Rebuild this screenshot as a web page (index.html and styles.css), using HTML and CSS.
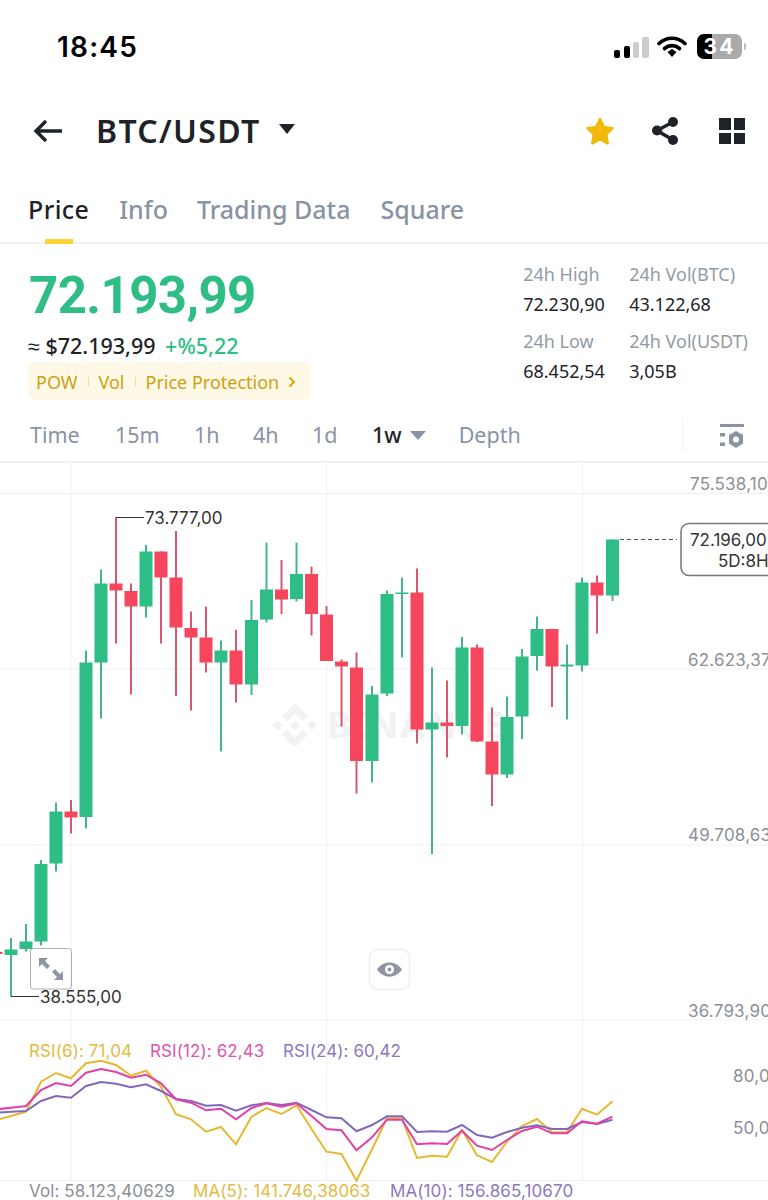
FILE: index.html
```html
<!DOCTYPE html>
<html>
<head>
    <title>BTC/USDT</title>
    <link rel="stylesheet" href="styles.css">
</head>
<body>

    <div class="status-bar">
        <span class="clock">18:45</span>
        <div class="status-icons">
            <svg class="signal" width="35" height="21" viewBox="0 0 35 21">
                <rect x="0" y="13" width="6" height="8" rx="2" fill="#000"/>
                <rect x="10" y="9" width="6" height="12" rx="2" fill="#000"/>
                <rect x="19" y="5" width="6" height="16" rx="2" fill="#ccc"/>
                <rect x="28" y="0" width="7" height="21" rx="2" fill="#ccc"/>
            </svg>
            <svg width="30" height="21" viewBox="0 0 30 21">
                <path d="M2 7.5C9.5 .5 20.5 .5 28 7.5" fill="none" stroke="#000" stroke-width="3.6" stroke-linecap="round"/>
                <path d="M7.5 12.5C12 8.7 18 8.7 22.5 12.5" fill="none" stroke="#000" stroke-width="3.6" stroke-linecap="round"/>
                <path d="M10.5 16L15 13 19.5 16 15 21z" fill="#000"/>
            </svg>
            <div class="battery">
                <div class="battery-level"></div>
                <span class="battery-text">34</span>
            </div>
            <div class="battery-tip"></div>
        </div>
    </div>

    <div class="top-bar">
        <svg class="back" width="30" height="24" viewBox="0 0 30 24">
            <path d="M29 12H3M13 2L3 12l10 10" fill="none" stroke="#1e2329" stroke-width="3.4"/>
        </svg>
        <span class="pair">BTC/USDT</span>
        <span class="pair-caret"></span>
        <div class="top-actions">
            <svg class="star" width="28" height="29" viewBox="0 0 28 29">
                <path d="M14 2L17.8 10 26.5 11.2 20.2 17.3 21.7 26.5 14 22.2 6.3 26.5 7.8 17.3 1.5 11.2 10.2 10z" fill="#f0b90b" stroke="#f0b90b" stroke-width="2.5" stroke-linejoin="round"/>
            </svg>
            <svg class="share" width="26" height="28" viewBox="0 0 26 28">
                <path d="M21 5L5 13.5 21 23" fill="none" stroke="#1e2329" stroke-width="3.5"/>
                <circle cx="21" cy="5" r="5" fill="#1e2329"/>
                <circle cx="5" cy="13.5" r="5" fill="#1e2329"/>
                <circle cx="21" cy="23" r="5" fill="#1e2329"/>
            </svg>
            <div class="grid-icon"><i></i><i></i><i></i><i></i></div>
        </div>
    </div>

    <div class="tabs">
        <div class="tab active">Price<div class="tab-mark"></div></div>
        <div class="tab tab-info">Info</div>
        <div class="tab">Trading Data</div>
        <div class="tab">Square</div>
    </div>

    <div class="summary">
        <div class="price-col">
            <div class="last-price">72.193,99</div>
            <div class="price-sub">≈ $72.193,99 <span class="green">+%5,22</span></div>
            <div class="tags">
                <span>POW</span><i class="tag-sep"></i>
                <span>Vol</span><i class="tag-sep"></i>
                <span class="tag-long">Price Protection</span>
                <svg width="8" height="12" viewBox="0 0 8 12"><path d="M1.5 1.5L6 6l-4.5 4.5" fill="none" stroke="#d9a60e" stroke-width="2"/></svg>
            </div>
        </div>
        <div class="stats">
            <div class="stat-label">24h High</div>
            <div class="stat-label">24h Vol(BTC)</div>
            <div class="stat-value">72.230,90</div>
            <div class="stat-value">43.122,68</div>
            <div class="stat-label">24h Low</div>
            <div class="stat-label">24h Vol(USDT)</div>
            <div class="stat-value">68.452,54</div>
            <div class="stat-value">3,05B</div>
        </div>
    </div>

    <div class="intervals">
        <span class="iv iv-time">Time</span>
        <span class="iv iv-15m">15m</span>
        <span class="iv iv-1h">1h</span>
        <span class="iv iv-4h">4h</span>
        <span class="iv iv-1d">1d</span>
        <span class="iv iv-1w">1w</span>
        <span class="iv-caret"></span>
        <span class="iv">Depth</span>
        <div class="iv-tool">
            <svg width="24" height="24" viewBox="0 0 24 24">
                <rect x="0" y="0" width="24" height="3" fill="#8a93a3"/>
                <rect x="0" y="9" width="5" height="3.5" fill="#8a93a3"/>
                <rect x="0" y="18.5" width="5" height="3.5" fill="#8a93a3"/>
                <path d="M16 7l7 4v8.5L16 24l-7-4.5v-8.500z" fill="#8a93a3"/>
                <circle cx="16" cy="15.5" r="3" fill="#fff"/>
            </svg>
        </div>
    </div>

    <div class="chart">
        <svg id="chart-svg" width="768" height="737" viewBox="0 463 768 737">
            <g class="grid-lines">
                <path d="M0 493.5H768M0 669H768M0 845H768M0 1020H768M0 1180.5H768"/>
                <path d="M71 463V1180M326.5 463V1180M582.5 463V1180"/>
            </g>
            <g class="watermark">
                <path d="M295 703.5l13 13-5 5-8-8-8 8-5-5zM295 747.5l13-13-5-5-8 8-8-8-5 5zM278 720.5l5 5-5 5-5-5zM312 720.5l5 5-5 5-5-5zM295 720.5l5 5-5 5-5-5z"/>
                <text x="327" y="738">BINANCE</text>
            </g>
            <g id="candles"></g>
            <g id="rsi-lines"></g>

            <path class="leader" d="M116 517.5H144M11 996.5H39"/>
            <text class="mark" x="145" y="524">73.777,00</text>
            <text class="mark" x="40" y="1003">38.555,00</text>

            <path class="last-line" d="M620 539.5H677"/>
            <rect class="last-box" x="681" y="523.5" width="100" height="52" rx="8"/>
            <text class="mark" x="690" y="546">72.196,00</text>
            <text class="mark" x="718" y="567">5D:8H</text>

            <text class="axis" x="690" y="490">75.538,10</text>
            <text class="axis" x="688" y="666">62.623,37</text>
            <text class="axis" x="688" y="841">49.708,63</text>
            <text class="axis" x="688" y="1017">36.793,90</text>
            <text class="axis" x="733" y="1082">80,0</text>
            <text class="axis" x="733" y="1134">50,0</text>

            <text class="legend rsi6" x="29" y="1057">RSI(6): 71,04</text>
            <text class="legend rsi12" x="150" y="1057">RSI(12): 62,43</text>
            <text class="legend rsi24" x="283" y="1057">RSI(24): 60,42</text>

            <text class="legend vol" x="29" y="1197">Vol: 58.123,40629</text>
            <text class="legend rsi6" x="193" y="1197">MA(5): 141.746,38063</text>
            <text class="legend rsi24" x="390" y="1197">MA(10): 156.865,10670</text>

            <rect class="btn-expand" x="30.5" y="948.5" width="41" height="40.5" rx="3"/>
            <path class="btn-glyph" d="M39 958h9l-3 3 5 5-3 3-5-5-3 3zM63 980h-9l3-3-5-5 3-3 5 5 3-3z"/>

            <rect class="btn-eye" x="369.5" y="949.5" width="40" height="40" rx="8"/>
            <path class="btn-glyph" fill-rule="evenodd" d="M377 969.5c6-9.5 19-9.5 25 0-6 9.5-19 9.5-25 0zm12.5-4.5a4.5 4.5 0 1 0 .01 0z"/>
            <circle class="btn-glyph" cx="389.5" cy="969.5" r="2"/>
        </svg>
    </div>

    <script>
        // x, high, top of body, bottom of body, low, up?
        const candles = [
            [-4, 950, 952, 954, 956, 0],
            [11, 938, 949.5, 955, 996.5, 1],
            [26, 924, 941.5, 949, 951.5, 1],
            [41, 860, 864, 941.5, 945.5, 1],
            [56, 802.5, 811.5, 863.5, 871.5, 1],
            [71, 800, 811.5, 817.5, 833.5, 0],
            [86, 650.5, 662.5, 817, 828.5, 1],
            [101, 569.5, 583.5, 662.5, 718.5, 1],
            [116, 517.5, 583.5, 590.5, 643.5, 0],
            [131, 583.5, 591, 606.5, 694.5, 0],
            [146, 545, 551.5, 606.5, 617.5, 1],
            [161, 551.5, 551.5, 577.5, 643.5, 0],
            [176, 531, 577.5, 627.5, 696, 0],
            [191, 611.5, 628, 637.5, 710.5, 0],
            [206, 606.5, 637.5, 662.5, 672.5, 0],
            [221, 640.5, 650.5, 662.5, 751.5, 1],
            [236, 630, 650.5, 684.5, 702.5, 0],
            [251.5, 600, 620, 684.5, 695, 1],
            [266.5, 542.5, 589.5, 619.5, 622.5, 1],
            [281.5, 560, 589.5, 599.5, 614, 0],
            [296.5, 542.5, 574, 599, 601.5, 1],
            [311.5, 566.5, 574, 614, 635.5, 0],
            [326.5, 606, 614.5, 661, 661, 0],
            [341.5, 659.5, 661.5, 666.5, 726.5, 0],
            [356.5, 652.5, 667.5, 761, 793.5, 0],
            [372, 686, 694.5, 761, 782.5, 1],
            [387, 590.5, 594, 693.5, 696, 1],
            [402, 577.5, 592.5, 594, 657.5, 1],
            [417, 568.5, 592.5, 729.5, 743.5, 0],
            [432, 667.5, 722.5, 729.5, 854, 1],
            [447, 680.5, 722.5, 726, 757.5, 0],
            [462, 637, 647.5, 726, 734.5, 1],
            [477, 644.5, 647.5, 741.5, 742, 0],
            [492, 707.5, 741.5, 774.5, 806, 0],
            [507, 696.5, 717, 774.5, 778, 1],
            [522, 649, 656.5, 716.5, 739, 1],
            [537, 616.5, 629, 656, 670.5, 1],
            [552, 629, 629, 666.5, 707, 0],
            [567, 644.5, 664.5, 666.5, 719.5, 1],
            [582, 577.5, 582.5, 665.5, 671.5, 1],
            [597, 575.5, 582.5, 595.5, 633.5, 0],
            [612.5, 539.5, 539.5, 595.5, 601, 1]
        ];

        // readings of the three lines, one per candle, as px*3 below y=1030
        const rsi = {
            'line-6': [270,258,245,155,129,145,100,92,105,137,122,170,253,268,305,291,343,260,234,252,226,297,365,372,452,358,265,265,384,377,380,300,376,396,335,288,267,307,307,236,254,214],
            'line-24': [248,245,243,213,198,203,168,156,161,172,163,183,207,213,227,225,242,226,219,225,218,240,262,265,304,285,259,259,306,304,305,285,315,323,306,293,286,297,297,276,282,269],
            'line-12': [238,233,228,180,159,168,128,117,126,143,134,160,208,218,241,236,268,234,220,230,220,258,297,301,361,322,269,269,343,340,342,302,347,360,330,303,290,310,310,274,281,260]
        };

        let html = '';
        candles.forEach(c => {
            const cls = c[5] ? 'up' : 'down';
            html += `<path class="wick ${cls}" d="M${c[0]} ${c[1]}V${c[4]}"/>`;
            html += `<rect class="${cls}" x="${c[0] - 6.5}" y="${c[2]}" width="13" height="${c[3] - c[2]}"/>`;
        });
        document.getElementById('candles').innerHTML = html;

        let lines = '';
        Object.keys(rsi).forEach(name => {
            const pts = rsi[name].map((v, i) => candles[i][0] + ',' + (1030 + v / 3).toFixed(1));
            lines += `<polyline class="${name}" points="${pts.join(' ')}"/>`;
        });
        document.getElementById('rsi-lines').innerHTML = lines;
    </script>
</body>
</html>
```

FILE: styles.css
```css
html, body {
    margin: 0;
    padding: 0;
    background-color: #fff;
}
body {
    width: 768px;
    height: 1200px;
    overflow: hidden;
    font-family: "Noto Sans", sans-serif;
    color: #1e2329;
}
.status-bar {
    height: 100px;
    display: flex;
    justify-content: space-between;
    align-items: flex-start;
    padding: 29px 22px 0 57px;
    box-sizing: border-box;
}
.clock {
    font-family: Inter, sans-serif;
    font-size: 28px;
    font-weight: 600;
    letter-spacing: 1.2px;
    line-height: 36px;
    color: #000;
}
.status-icons {
    display: flex;
    align-items: center;
    margin-top: 5px;
}
.status-icons svg {
    margin-right: 9px;
}
.status-icons .signal {
    margin-top: 2px;
    margin-right: 8px;
}
.battery {
    position: relative;
    width: 45px;
    height: 25px;
    background-color: #aaa;
    border-radius: 7px;
    overflow: hidden;
    margin-left: 1px;
}
.battery-level {
    width: 15px;
    height: 25px;
    background-color: #000;
}
.battery-text {
    position: absolute;
    left: 0;
    right: 0;
    top: 0;
    text-align: center;
    font-family: Inter, sans-serif;
    font-size: 21px;
    font-weight: 700;
    letter-spacing: 2px;
    line-height: 25px;
    color: #fff;
}
.battery-tip {
    width: 2px;
    height: 7px;
    margin-left: 2px;
    background-color: #bbb;
    border-radius: 0 2px 2px 0;
}
.top-bar {
    height: 62px;
    display: flex;
    align-items: center;
    padding: 0 23px 0 33px;
}
.pair {
    margin-left: 33px;
    font-size: 32px;
    font-weight: 600;
    letter-spacing: 1.3px;
    line-height: 40px;
}
.pair-caret {
    margin-left: 19px;
    margin-bottom: 4px;
    border-left: 8px solid transparent;
    border-right: 8px solid transparent;
    border-top: 10px solid #1e2329;
}
.top-actions {
    margin-left: auto;
    display: flex;
    align-items: center;
}
.star {
    margin-right: 38px;
}
.share {
    margin-right: 41px;
}
.grid-icon {
    display: grid;
    grid-template-columns: 11.5px 11.5px;
    gap: 3px;
}
.grid-icon i {
    height: 11.5px;
    background-color: #1e2329;
}
.tabs {
    height: 82px;
    display: flex;
    align-items: flex-start;
    gap: 30px;
    padding: 29px 0 0 28px;
    box-sizing: border-box;
    border-bottom: 2px solid #eff1f3;
}
.tab {
    font-size: 25px;
    font-weight: 500;
    line-height: 36px;
    color: #8a93a3;
}
.tab.active {
    color: #1e2329;
    letter-spacing: .4px;
}
.tab-info {
    margin-right: -1px;
}
.tab-mark {
    width: 28px;
    height: 5px;
    margin: 12px auto 0;
    background-color: #fcd535;
}
.summary {
    height: 165px;
    display: flex;
    justify-content: space-between;
    padding: 0 20px 0 28px;
}
.last-price {
    margin-top: 17px;
    padding-left: 1px;
    font-family: Roboto, sans-serif;
    font-size: 51px;
    font-weight: 700;
    letter-spacing: -.6px;
    line-height: 70px;
    color: #2ebd85;
}
.price-sub {
    margin-top: 0;
    font-size: 21.5px;
    font-weight: 500;
    line-height: 30px;
    white-space: nowrap;
}
.green {
    color: #2ebd85;
    margin-left: 4px;
}
.tags {
    display: flex;
    align-items: center;
    height: 38px;
    margin-top: 1px;
    padding: 1px 0 0 8px;
    box-sizing: border-box;
    width: 283px;
    background-color: #fef8e6;
    border-radius: 8px;
    font-size: 18px;
    color: #d0a010;
}
.tag-sep {
    width: 1px;
    height: 9px;
    margin: 0 10px;
    background-color: #ecd9a0;
}
.tag-long {
    white-space: nowrap;
}
.tags svg {
    margin-left: 9px;
}
.stats {
    display: grid;
    grid-template-columns: 106px auto;
    grid-template-rows: 30px 37px 30px 30px;
    align-items: start;
    align-content: start;
    margin-top: 15px;
    font-size: 18px;
    line-height: 30px;
    height: 127px;
}
.stat-label {
    color: #929aa5;
}
.stat-value {
    color: #1e2329;
}
.intervals {
    height: 54px;
    display: flex;
    align-items: center;
    padding-left: 30px;
    box-sizing: border-box;
    border-bottom: 2px solid #eff1f3;
    font-size: 21.5px;
    color: #8a93a3;
}
.iv {
    line-height: 30px;
}
.iv-time {
    width: 85px;
}
.iv-15m {
    width: 79px;
}
.iv-1h, .iv-4h {
    width: 59px;
}
.iv-1d {
    width: 60px;
}
.iv-1w {
    color: #1e2329;
    font-weight: 500;
}
.iv-caret {
    margin: 0 33px 0 8px;
    border-left: 8px solid transparent;
    border-right: 8px solid transparent;
    border-top: 9px solid #8a93a3;
}
.iv-tool {
    margin-left: auto;
    width: 86px;
    height: 32px;
    box-sizing: border-box;
    padding: 5px 0 0 37px;
    border-left: 1px solid #eef0f2;
}
.chart {
    height: 737px;
    overflow: hidden;
}
.chart svg {
    display: block;
}
.grid-lines path {
    fill: none;
    stroke: #f0f1f3;
    stroke-width: 1;
}
.watermark {
    fill: #f1f2f3;
}
.watermark text {
    font-family: "Noto Sans", sans-serif;
    font-size: 36px;
    font-weight: 700;
    letter-spacing: 2px;
}
rect.up {
    fill: #2ebd85;
}
rect.down {
    fill: #f6465d;
}
.wick {
    fill: none;
    stroke-width: 2;
}
.wick.up {
    stroke: #45b48e;
}
.wick.down {
    stroke: #d9566f;
}
polyline {
    fill: none;
    stroke-width: 2;
}
.line-6 {
    stroke: #e5b92f;
}
.line-12 {
    stroke: #e040a8;
}
.line-24 {
    stroke: #8268bd;
}
.leader {
    fill: none;
    stroke: #333;
    stroke-width: 1;
}
.last-line {
    fill: none;
    stroke: #555;
    stroke-width: 1;
    stroke-dasharray: 4 3;
}
.last-box {
    fill: #fff;
    stroke: #777;
    stroke-width: 1.5;
}
.mark, .axis, .legend {
    font-family: Inter, sans-serif;
    font-size: 17px;
}
.mark {
    fill: #333;
}
.axis {
    fill: #8b8f98;
    letter-spacing: .2px;
}
.legend {
    letter-spacing: .1px;
}
.legend.vol {
    fill: #8b8f98;
}
.legend.rsi6 {
    fill: #e3bb45;
}
.legend.rsi12 {
    fill: #dd55aa;
}
.legend.rsi24 {
    fill: #8c78bd;
}
.btn-expand {
    fill: none;
    stroke: #aeb0b5;
    stroke-width: 1;
}
.btn-eye {
    fill: #fff;
    stroke: #eceef0;
    stroke-width: 1.5;
}
.btn-glyph {
    fill: #8f96a3;
}
```
